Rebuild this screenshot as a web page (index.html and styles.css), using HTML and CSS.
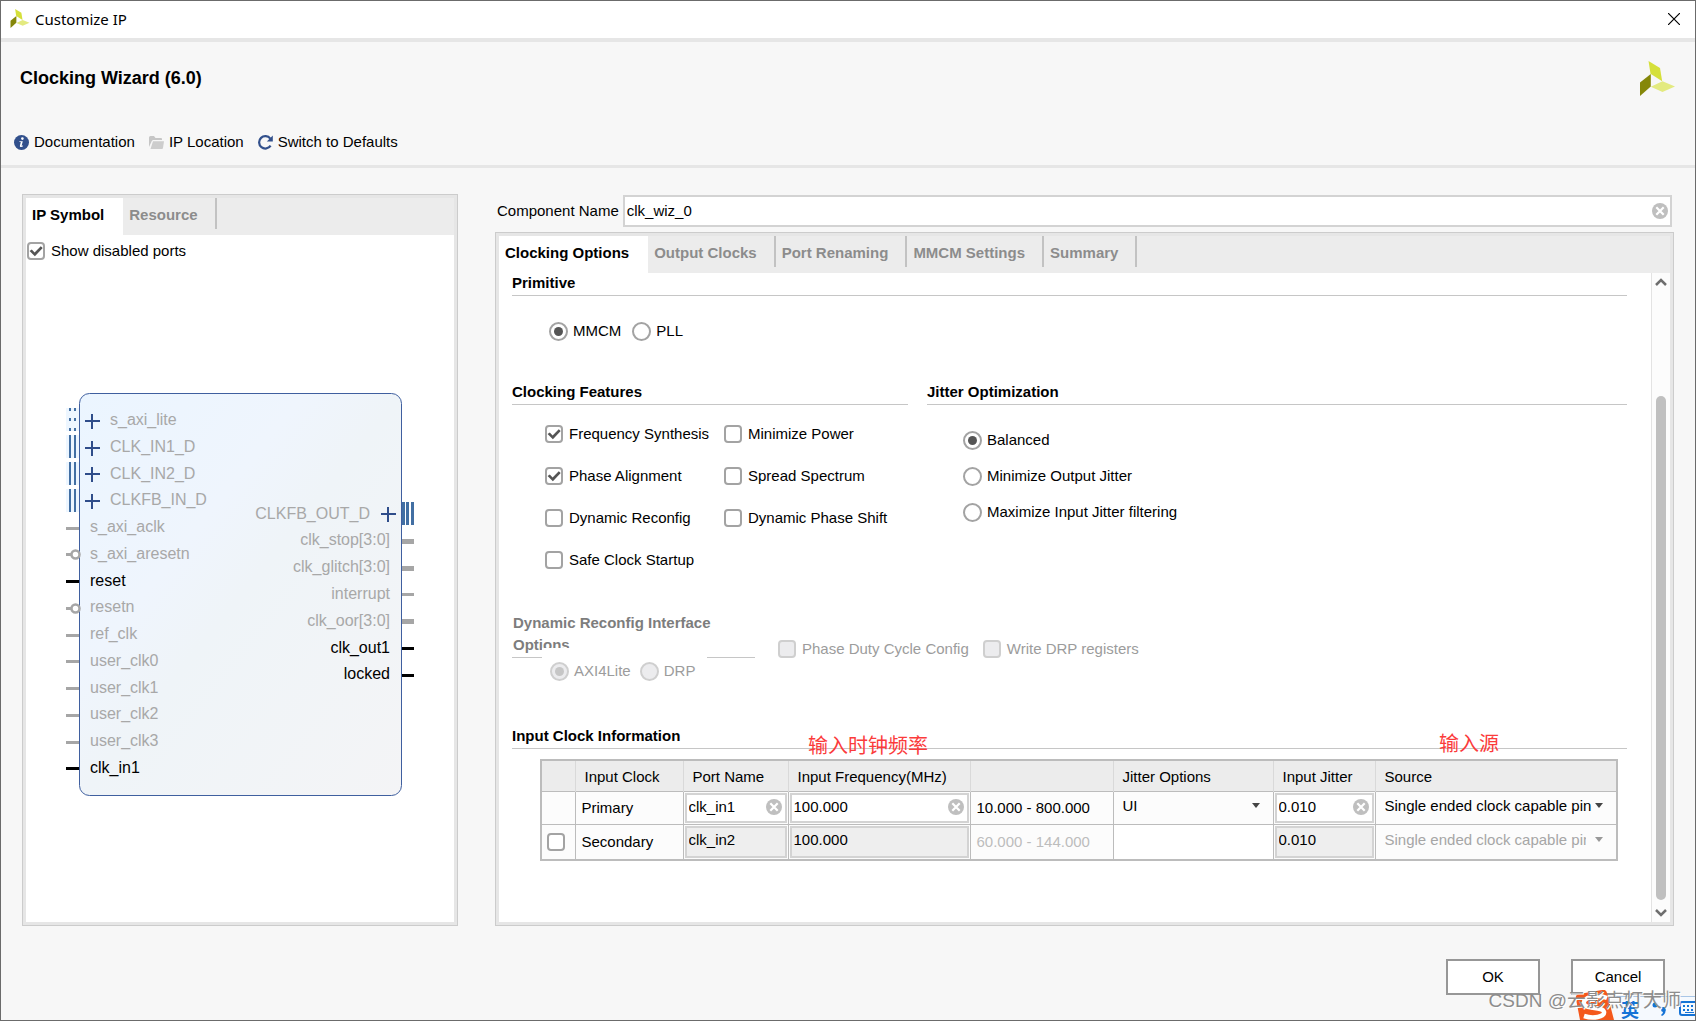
FILE: index.html
```html
<!DOCTYPE html>
<html lang="en">
<head>
<meta charset="utf-8">
<title>Customize IP</title>
<link rel="stylesheet" href="styles.css">
</head>
<body>
<svg class="defs" width="0" height="0" aria-hidden="true">
  <symbol id="logo" viewBox="0 0 35 35">
    <path fill="#d5e03a" d="M8.500 0 20 7l2.200 13.200L10.500 12.800z"/>
    <path fill="#858709" d="M0 21.500 10.800 13v12.500L0 35z"/>
    <path fill="#e3ea80" d="M10.800 25.800 22.500 20.200 35 25.500 22.500 31z"/>
  </symbol>
  <symbol id="clear" viewBox="0 0 16 16">
    <circle cx="8" cy="8" r="8" fill="#bfbfbf"/>
    <path d="M4.300 4.300l7.400 7.400M11.700 4.300l-7.400 7.400" stroke="#fff" stroke-width="2.200"/>
  </symbol>
  <symbol id="plus" viewBox="0 0 15 15">
    <path d="M6 0h2v15H6zM0 6h15v2H0z" fill="#2f4d8a"/>
  </symbol>
</svg>

<div class="window">
  <div class="titlebar">
    <svg class="title-logo" width="20" height="19"><use href="#logo"/></svg>
    <span class="title-text">Customize IP</span>
    <button class="close" aria-label="Close"><svg width="12" height="12" viewBox="0 0 12 12"><path d="M0 0l12 12M12 0L0 12" stroke="#000" stroke-width="1.200"/></svg></button>
  </div>

  <header class="header">
    <div class="header-top">
      <h1>Clocking Wizard (6.0)</h1>
      <svg width="35" height="35"><use href="#logo"/></svg>
    </div>
    <div class="toolbar">
      <button><svg width="15" height="15" viewBox="0 0 15 15"><circle cx="7.500" cy="7.500" r="7.500" fill="#32508c"/><circle cx="8.400" cy="3.600" r="1.300" fill="#fff"/><path d="M5.500 6.200h3.300L7.600 10.800l1.500-.4-.3 1.100c-1 .7-3.300.8-2.900-.8l.9-3.600H5.300z" fill="#fff"/></svg>Documentation</button>
      <button><svg width="15" height="13" viewBox="0 0 15 13"><path d="M0 11V1.500Q0 0 1.500 0H5l1.500 2H12q1 0 1 1v1H4.500Q3.300 4 2.800 5z" fill="#c6c6c6"/><path d="M4 5.300h11l-1 6.700q-.1 1-1 1H1.500z" fill="#cdcdcd"/></svg>IP Location</button>
      <button><svg width="15" height="15" viewBox="0 0 15 15"><path d="M12.600 10.600A6.200 6.200 0 1 1 12.300 3.600" fill="none" stroke="#32508c" stroke-width="2.200"/><path d="M14.800.5v6H8.800z" fill="#32508c"/></svg>Switch to Defaults</button>
    </div>
  </header>

  <main class="main">
    <section class="panel">
      <div class="tabs">
        <button class="tab active">IP Symbol</button>
        <button class="tab">Resource</button>
      </div>
      <div class="symbol-pane">
        <label class="check"><input type="checkbox" checked>Show disabled ports</label>
        <div class="canvas">
          <svg class="symbol" width="352" height="412" viewBox="64 388 352 412">
            <defs><linearGradient id="fill" x1="0" y1="0" x2="1" y2="1"><stop offset="0" stop-color="#ebf5ff"/><stop offset=".35" stop-color="#eff5fd"/><stop offset=".5" stop-color="#eff4f8"/><stop offset="1" stop-color="#f4f4f6"/></linearGradient></defs>
            <g fill="#edf6ff"><path d="M66 408h13v23H66zM66 435h13v23H66zM66 462h13v23H66zM66 489h13v23H66z"/></g>
            <rect x="79.500" y="393.500" width="322" height="402" rx="10" fill="url(#fill)" stroke="#3f5f9f"/>
            <g fill="#426fa3">
              <path d="M69 408h2v3h-2zM74 408h2v3h-2zM69 418h2v3h-2zM74 418h2v3h-2zM69 428h2v3h-2zM74 428h2v3h-2z"/>
              <path d="M69 435h2v23h-2zM74 435h2v23h-2zM69 462h2v23h-2zM74 462h2v23h-2zM69 489h2v23h-2zM74 489h2v23h-2z"/>
              <path d="M402 502h3v23h-3zM406 502h3v23h-3zM411 502h3v23h-3z"/>
            </g>
            <use href="#plus" x="85" y="414" width="15" height="15"/>
            <use href="#plus" x="85" y="441" width="15" height="15"/>
            <use href="#plus" x="85" y="467" width="15" height="15"/>
            <use href="#plus" x="85" y="494" width="15" height="15"/>
            <use href="#plus" x="381" y="507" width="15" height="15"/>
            <g fill="#a6a6a6">
              <path d="M66 527h13v3H66zM66 553h5v3h-5zM66 607h5v3h-5zM66 634h13v3H66zM66 660h13v3H66zM66 687h13v3H66zM66 714h13v3H66zM66 741h13v3H66z"/>
              <path d="M402 539h12v5h-12zM402 566h12v5h-12zM402 593h12v3h-12zM402 619h12v5h-12z"/>
            </g>
            <g fill="#fff" stroke="#a6a6a6" stroke-width="2.500"><circle cx="75.500" cy="554.500" r="4"/><circle cx="75.500" cy="608.500" r="4"/></g>
            <path d="M66 580h13v3H66zM66 767h13v3H66zM402 647h12v3h-12zM402 674h12v3h-12z"/>
            <g class="port off">
              <text x="110" y="425">s_axi_lite</text>
              <text x="110" y="452">CLK_IN1_D</text>
              <text x="110" y="479">CLK_IN2_D</text>
              <text x="110" y="505">CLKFB_IN_D</text>
              <text x="90" y="532">s_axi_aclk</text>
              <text x="90" y="559">s_axi_aresetn</text>
              <text x="90" y="612">resetn</text>
              <text x="90" y="639">ref_clk</text>
              <text x="90" y="666">user_clk0</text>
              <text x="90" y="693">user_clk1</text>
              <text x="90" y="719">user_clk2</text>
              <text x="90" y="746">user_clk3</text>
            </g>
            <g class="port">
              <text x="90" y="586">reset</text>
              <text x="90" y="773">clk_in1</text>
            </g>
            <g class="port off out">
              <text x="370" y="519">CLKFB_OUT_D</text>
              <text x="390" y="545">clk_stop[3:0]</text>
              <text x="390" y="572">clk_glitch[3:0]</text>
              <text x="390" y="599">interrupt</text>
              <text x="390" y="626">clk_oor[3:0]</text>
            </g>
            <g class="port out">
              <text x="390" y="653">clk_out1</text>
              <text x="390" y="679">locked</text>
            </g>
          </svg>
        </div>
      </div>
    </section>

    <div class="config">
      <div class="name-row">
        <label for="component">Component Name</label>
        <div class="field name-field"><input id="component" type="text" value="clk_wiz_0"><button class="clear" aria-label="Clear component name"><svg width="16" height="16"><use href="#clear"/></svg></button></div>
      </div>
      <section class="panel options">
        <div class="tabs">
          <button class="tab active">Clocking Options</button>
          <button class="tab">Output Clocks</button>
          <button class="tab">Port Renaming</button>
          <button class="tab">MMCM Settings</button>
          <button class="tab">Summary</button>
        </div>
        <div class="scroller">
          <form class="form">
            <h2>Primitive</h2>
            <div class="primitive">
              <label class="radio"><input type="radio" name="primitive" checked>MMCM</label>
              <label class="radio"><input type="radio" name="primitive">PLL</label>
            </div>

            <div class="columns">
              <section>
                <h2>Clocking Features</h2>
                <div class="features">
                  <label class="check"><input type="checkbox" checked>Frequency Synthesis</label>
                  <label class="check"><input type="checkbox">Minimize Power</label>
                  <label class="check"><input type="checkbox" checked>Phase Alignment</label>
                  <label class="check"><input type="checkbox">Spread Spectrum</label>
                  <label class="check"><input type="checkbox">Dynamic Reconfig</label>
                  <label class="check"><input type="checkbox">Dynamic Phase Shift</label>
                  <label class="check"><input type="checkbox">Safe Clock Startup</label>
                </div>
              </section>
              <section>
                <h2>Jitter Optimization</h2>
                <div class="jitter">
                  <label class="radio"><input type="radio" name="jitter" checked>Balanced</label>
                  <label class="radio"><input type="radio" name="jitter">Minimize Output Jitter</label>
                  <label class="radio"><input type="radio" name="jitter">Maximize Input Jitter filtering</label>
                </div>
              </section>
            </div>

            <div class="reconfig">
              <section class="interface">
                <h2>Dynamic Reconfig Interface Options</h2>
                <div class="interface-choices">
                  <label class="radio"><input type="radio" name="iface" checked disabled>AXI4Lite</label>
                  <label class="radio"><input type="radio" name="iface" disabled>DRP</label>
                </div>
              </section>
              <label class="check"><input type="checkbox" disabled>Phase Duty Cycle Config</label>
              <label class="check"><input type="checkbox" disabled>Write DRP registers</label>
            </div>

            <section class="clocks">
              <h2>Input Clock Information</h2>
              <span class="note note-frequency">输入时钟频率</span>
              <span class="note note-source">输入源</span>
              <table>
                <colgroup><col class="c-pick"><col class="c-clock"><col class="c-port"><col class="c-freq"><col class="c-range"><col class="c-options"><col class="c-jitter"><col></colgroup>
                <thead>
                  <tr><th></th><th>Input Clock</th><th>Port Name</th><th>Input Frequency(MHz)</th><th></th><th>Jitter Options</th><th>Input Jitter</th><th>Source</th></tr>
                </thead>
                <tbody>
                  <tr>
                    <td></td>
                    <td>Primary</td>
                    <td class="edit"><div class="field"><input type="text" value="clk_in1" aria-label="Primary port name"><button type="button" class="clear" aria-label="Clear"><svg width="16" height="16"><use href="#clear"/></svg></button></div></td>
                    <td class="edit"><div class="field"><input type="text" value="100.000" aria-label="Primary frequency"><button type="button" class="clear" aria-label="Clear"><svg width="16" height="16"><use href="#clear"/></svg></button></div></td>
                    <td>10.000 - 800.000</td>
                    <td class="pick"><div class="drop"><select aria-label="Jitter options"><option>UI</option><option>PS</option></select></div></td>
                    <td class="edit"><div class="field"><input type="text" value="0.010" aria-label="Primary jitter"><button type="button" class="clear" aria-label="Clear"><svg width="16" height="16"><use href="#clear"/></svg></button></div></td>
                    <td class="pick"><div class="drop"><select aria-label="Primary source"><option>Single ended clock capable pin</option></select></div></td>
                  </tr>
                  <tr>
                    <td class="tick"><input type="checkbox" aria-label="Secondary clock"></td>
                    <td>Secondary</td>
                    <td class="edit"><div class="field locked"><input type="text" value="clk_in2" readonly aria-label="Secondary port name"></div></td>
                    <td class="edit"><div class="field locked"><input type="text" value="100.000" readonly aria-label="Secondary frequency"></div></td>
                    <td class="dim">60.000 - 144.000</td>
                    <td class="blank"></td>
                    <td class="edit"><div class="field locked"><input type="text" value="0.010" readonly aria-label="Secondary jitter"></div></td>
                    <td class="pick"><div class="drop drop-off"><select disabled aria-label="Secondary source"><option>Single ended clock capable pin</option></select></div></td>
                  </tr>
                </tbody>
              </table>
            </section>
          </form>
          <div class="scrollbar">
            <button aria-label="Scroll up"><svg width="12" height="8" viewBox="0 0 12 8"><path d="M1 7l5-5 5 5" fill="none" stroke="#6e6e6e" stroke-width="2.500"/></svg></button>
            <div class="track"><div class="thumb"></div></div>
            <button aria-label="Scroll down"><svg width="12" height="8" viewBox="0 0 12 8"><path d="M1 1l5 5 5-5" fill="none" stroke="#6e6e6e" stroke-width="2.500"/></svg></button>
          </div>
        </div>
      </section>
    </div>
  </main>

  <footer class="footer">
    <button>OK</button>
    <button>Cancel</button>
  </footer>

  <div class="ime">
    <svg class="ime-logo" width="40" height="30" viewBox="0 0 40 30"><path d="M1 9Q0 5 4 4L27 0q4-1 5 3l7 27H5z" fill="#f4581c"/><path d="M32 8C22 4 7 7 9 14c2 6 19 2 20 8 1 5-11 7-20 4" fill="none" stroke="#fff" stroke-width="4.500"/></svg>
    <div class="ime-bar">
      <span class="ime-lang">英</span>
      <svg width="16" height="16" viewBox="0 0 16 16"><circle cx="4" cy="4" r="2.500" fill="#1573d6"/><path d="M10 8.500a2.500 2.500 0 1 1 4.500 1.500q0 3-3.500 5l-1-1q2-1.500 2-3-2-.5-2-2.500z" fill="#1573d6"/></svg>
      <svg width="16" height="16" viewBox="0 0 16 16"><path d="M16 1H3Q1 1 1 3v9q0 2 2 2h13" fill="none" stroke="#1573d6" stroke-width="2"/><path d="M4 4h2v2H4zM8 4h2v2H8zM12 4h2v2h-2zM4 8h2v2H4zM8 8h2v2H8zM12 8h2v2h-2zM6 11h9v1H6z" fill="#1573d6"/></svg>
    </div>
  </div>
  <div class="watermark">CSDN @云影点灯大师</div>
</div>
</body>
</html>
```
FILE: styles.css
```css
* { box-sizing: border-box; }

body {
  margin: 0;
  font: 15px/18px "Liberation Sans", Arial, "Noto Sans CJK SC", sans-serif;
  color: #000;
}

.defs { position: absolute; }

h1, h2 { margin: 0; font-weight: bold; }

button {
  font: inherit;
  color: inherit;
  background: none;
  border: 0;
  padding: 0;
}

svg { display: block; flex: none; }

.window {
  position: relative;
  display: flex;
  flex-direction: column;
  min-height: 100vh;
  overflow: hidden;
  background: #f7f7f7;
  border: 1px solid #6b6b6b;
}

/* Title bar and header */

.titlebar {
  display: flex;
  align-items: center;
  height: 41px;
  padding: 0 15px 2px 9px;
  background: #fff;
  border-bottom: 4px solid #e6e6e6;
}

.title-text {
  flex: 1;
  margin-left: 5px;
  font-family: "Noto Sans", "Open Sans", sans-serif;
}

.header {
  padding: 19px 20px 14px 13px;
  border-bottom: 3px solid #e6e6e6;
}

.header-top {
  display: flex;
  justify-content: space-between;
  padding-left: 6px;
}

h1 { font-size: 18px; line-height: 34px; }

.toolbar {
  display: flex;
  gap: 14px;
  margin-top: 37px;
}

.toolbar button {
  display: flex;
  align-items: center;
  gap: 5px;
}

/* Panels */

.main {
  flex: 1;
  display: grid;
  grid-template-columns: 436px minmax(0, 1fr);
  gap: 37px;
  padding: 26px 21px 0;
}

.panel {
  display: flex;
  flex-direction: column;
  border: 1px solid #ccc;
  background: #fff;
  box-shadow: inset 0 0 0 3px #e6e6e6;
  padding: 3px;
}

.tabs {
  display: flex;
  height: 37px;
  padding-bottom: 6px;
  background: #ececec;
}

.tab {
  padding: 2px 17px 0 6px;
  font-weight: bold;
  color: #8c8c8c;
  border-right: 2px solid #c2c2c2;
}

.tab.active {
  height: 37px;
  padding-right: 19px;
  padding-bottom: 6px;
  color: #000;
  background: #fff;
  border-right: 0;
}

.symbol-pane {
  flex: 1;
  display: flex;
  flex-direction: column;
  padding-top: 6px;
}

.symbol-pane .check { margin-left: 1px; }

.canvas {
  flex: 1;
  display: flex;
  align-items: center;
  justify-content: center;
  padding-top: 4px;
}

.port { font-size: 16px; fill: #000; }
.port.off { fill: #a8a8a8; }
.port.out { text-anchor: end; }

.config {
  display: flex;
  flex-direction: column;
  gap: 5px;
  padding-top: 1px;
}

.name-row {
  display: flex;
  align-items: center;
  gap: 4px;
  padding: 0 2px;
}

.name-field { flex: 1; }

.options { flex: 1; }

/* Controls */

.field {
  display: flex;
  align-items: center;
  height: 32px;
  padding: 0 2px;
  background: #fff;
  border: 2px solid #d3d3d3;
}

.field input {
  flex: 1;
  width: 0;
  min-width: 0;
  padding: 0;
  border: 0;
  outline: 0;
  font: inherit;
  color: #000;
  background: none;
}

.check, .radio {
  display: flex;
  align-items: center;
  gap: 6px;
  height: 20px;
  white-space: nowrap;
}

.radio { gap: 5px; }

input[type="checkbox"], input[type="radio"] {
  appearance: none;
  flex: none;
  display: grid;
  place-items: center;
  width: 18px;
  height: 18px;
  margin: 0;
  background: #fff;
  border: 2px solid #a3a3a3;
  border-radius: 4px;
}

input[type="radio"] {
  width: 19px;
  height: 19px;
  border-radius: 50%;
}

input[type="checkbox"]:checked::before {
  content: "";
  width: 14px;
  height: 12px;
  background: #555;
  clip-path: polygon(4% 50%, 20% 38%, 40% 62%, 84% 10%, 98% 24%, 42% 94%);
}

input[type="radio"]:checked::before {
  content: "";
  width: 9px;
  height: 9px;
  border-radius: 50%;
  background: #555;
}

input:disabled[type="checkbox"], input:disabled[type="radio"] {
  background: #ececee;
  border-color: #cfcfcf;
}

input[type="radio"]:disabled::before { background: #c6c6c6; }

label:has(input:disabled) { color: #9c9c9c; }

/* Options form */

.scroller {
  flex: 1;
  display: flex;
}

.form {
  flex: 1;
  min-width: 0;
  padding: 0 24px 0 13px;
}

h2 {
  font-size: 15px;
  line-height: 18px;
  padding: 1px 0 3px;
  border-bottom: 1px solid #c6c6c6;
}

.primitive {
  display: flex;
  gap: 11px;
  padding: 25px 0 41px 37px;
}

.columns {
  display: grid;
  grid-template-columns: 396px minmax(0, 1fr);
  gap: 19px;
}

.features {
  display: grid;
  grid-template-columns: 179px 1fr;
  grid-auto-rows: 42px;
  align-items: center;
  padding: 8px 0 0 33px;
}

.jitter {
  display: grid;
  gap: 16px;
  padding: 25px 0 0 36px;
}

.reconfig {
  display: flex;
  margin-top: 31px;
}

.reconfig > .check { margin: 27px 0 0 23px; }
.reconfig > .check ~ .check { margin-left: 14px; }

.interface { width: 243px; }

.interface h2 {
  padding: 0 40px 1px 1px;
  line-height: 22px;
  color: #7d7d7d;
}

/* The choices sit partly over the wrapped heading and its rule. */
.interface-choices {
  position: relative;
  display: flex;
  gap: 9px;
  width: 165px;
  margin: -10px 0 0 30px;
  padding: 13px 0 0 8px;
  background: #fff;
}

.clocks {
  position: relative;
  margin-top: 45px;
}

.note {
  position: absolute;
  top: 8px;
  font-size: 20px;
  line-height: 24px;
  color: #fb3b3b;
}

.note-frequency { left: 296px; }
.note-source { left: 927px; top: 6px; }

/* Clock table */

table {
  width: calc(100% - 37px);
  margin: 10px 0 0 28px;
  table-layout: fixed;
  border-collapse: collapse;
  border: 2px solid #bcbcbc;
  background: #fcfcfc;
}

.c-pick { width: 34px; }
.c-clock { width: 108px; }
.c-port { width: 105px; }
.c-freq { width: 182px; }
.c-range { width: 143px; }
.c-options { width: 160px; }
.c-jitter { width: 102px; }

th {
  height: 31px;
  padding: 3px 0 0 9px;
  text-align: left;
  font-weight: normal;
  background: #ececec;
  border-right: 1px solid #d9d9d9;
  white-space: nowrap;
}

td {
  height: 33px;
  padding: 1px 0 0 6px;
  border: 1px solid #bcbcbc;
  white-space: nowrap;
}

td.edit { padding: 1px; }
td.tick { padding: 0 0 0 5px; }
td.pick { padding: 0; }
td.dim { color: #bdbdbd; }
td.blank { background: #fff; }

.edit .field {
  height: 30px;
  padding-bottom: 1px;
}

.edit .locked {
  height: 32px;
  padding-bottom: 3px;
  background: #eee;
}

.edit .clear { margin-right: 1px; }

.drop { position: relative; }

.drop::after {
  content: "";
  position: absolute;
  top: 6px;
  right: 13px;
  border: 4px solid transparent;
  border-top: 5px solid #444;
  border-bottom: 0;
}

.drop-off::after { border-top-color: #999; }

select {
  appearance: none;
  display: block;
  width: calc(100% - 22px);
  padding: 0 0 3px 9px;
  border: 0;
  font: inherit;
  color: #000;
  background: none;
}

select:disabled {
  width: calc(100% - 30px);
  color: #a6a6a6;
  opacity: 1;
}

/* Scroll bar */

.scrollbar {
  display: flex;
  flex-direction: column;
  width: 19px;
  padding-right: 1px;
  background: #fcfcfc;
  border-left: 1px solid #e3e3e3;
}

.scrollbar button {
  display: grid;
  place-items: center;
  height: 18px;
}

.track {
  flex: 1;
  display: flex;
  padding: 105px 3px 4px 4px;
}

.thumb {
  flex: 1;
  border-radius: 5px;
  background: #c0c0c0;
}

/* Footer and overlays */

.footer {
  display: flex;
  justify-content: flex-end;
  gap: 31px;
  padding: 33px 30px 25px;
}

.footer button {
  width: 94px;
  height: 36px;
  background: #fff;
  border: 2px solid #979797;
}

.ime {
  position: absolute;
  right: 0;
  bottom: 0;
  display: flex;
  align-items: flex-end;
}

.ime-bar {
  display: flex;
  align-items: center;
  gap: 12px;
  height: 24px;
  padding-left: 6px;
  background: #f5f9fe;
  border-top: 1px solid #a9c6e6;
}

.ime-lang {
  font: bold 18px/24px "Noto Sans CJK SC", sans-serif;
  color: #1573d6;
}

.watermark {
  position: absolute;
  right: 14px;
  bottom: 7px;
  font-size: 19px;
  line-height: 24px;
  color: #8d8d8d;
  text-shadow: 1px 1px 0 #fff;
}
```
